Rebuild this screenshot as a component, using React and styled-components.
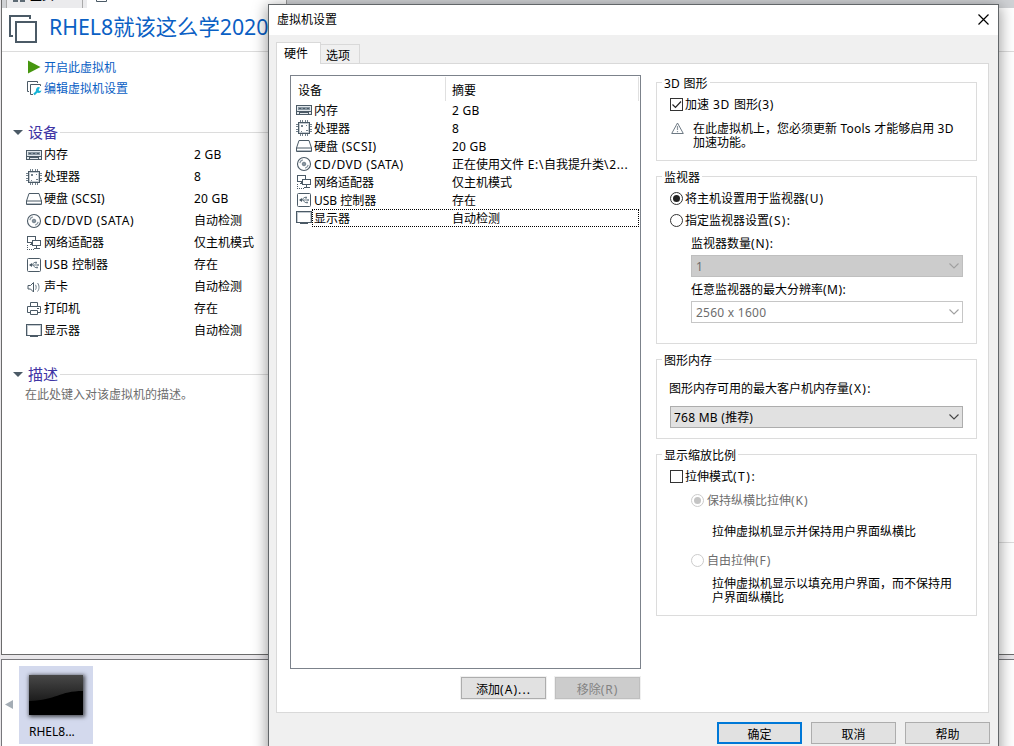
import React from "react";
import styled, { createGlobalStyle, css } from "styled-components";

const GlobalStyle = createGlobalStyle`
  * {
    box-sizing: border-box;
  }
  body {
    margin: 0;
    overflow: hidden;
    font-family: "Noto Sans", "Noto Sans CJK SC", sans-serif;
    font-size: 12px;
    color: #000;
  }
  svg {
    display: block;
    flex: none;
  }
`;

const INK = "#4b5a66";

const icons = {
  memory: (
    <g shapeRendering="crispEdges">
      <path d="M0 3h16v10H0z" fill={INK} />
      <path d="M1 4h14v5H1zM1 10h2v2H1zM4 11h8v1H4zM13 10h2v2h-2z" fill="#e4e9ed" />
      <path d="M2 5h12v3H2z" fill="#8795a0" />
      <path d="M3 6h2v1H3zM7 6h2v1H7zM11 6h2v1h-2z" fill={INK} />
    </g>
  ),
  cpu: (
    <g shapeRendering="crispEdges">
      <path
        d="M4 0h1v2H4zM6 0h1v2H6zM9 0h1v2H9zM11 0h1v2h-1zM4 14h1v2H4zM6 14h1v2H6zM9 14h1v2H9zM11 14h1v2h-1zM0 4h2v1H0zM0 6h2v1H0zM0 9h2v1H0zM0 11h2v1H0zM14 4h2v1h-2zM14 6h2v1h-2zM14 9h2v1h-2zM14 11h2v1h-2z"
        fill="#74828d"
      />
      <path d="M2.5 2.5h11v11h-11z" fill="#fff" stroke={INK} />
      <path d="M3.5 3.5h9v9h-9z" fill="none" stroke="#c3cad0" />
      <path d="M5 5h2v2H5zM10 10h2v1h-2zM5 11h1v1H5zM10 5h1v1h-1z" fill="#74828d" />
    </g>
  ),
  disk: (
    <g fill="none" stroke={INK}>
      <path d="M3 2.5h10L15.5 10v3.5H.5V10z" />
      <path d="M.5 10h15" />
      <path d="M1 12.500h14" stroke="#b4bdc4" />
    </g>
  ),
  cd: (
    <g fill="none" stroke={INK}>
      <circle cx="8" cy="8" r="6.5" strokeWidth="1.1" />
      <circle cx="8" cy="8" r="1.8" fill="#8795a0" stroke="#74828d" />
      <path d="M3.8 7.2A4.3 4.3 0 0 1 6.8 3.9M12.2 8.8a4.3 4.3 0 0 1-3 3.3" strokeWidth="1.2" stroke="#8795a0" />
    </g>
  ),
  network: (
    <g fill="none" stroke={INK} shapeRendering="crispEdges">
      <path d="M1.5 1.5h8v6h-8zM4 9.5h4M5.5 8v2" />
      <path d="M6.5 5.5h8v5h-8z" fill="#fff" />
      <path d="M10.5 11v2M8 13.5h6" />
      <path d="M1.5 10v4M1 14.5h8" strokeDasharray="1 1" />
    </g>
  ),
  usb: (
    <g fill="none" stroke={INK}>
      <rect x="1.5" y="1.5" width="13" height="13" rx="1" />
      <path d="M4 8h8M6 8l2-2.5h2M7 8l2 2.5h2" stroke="#6f7e89" />
      <path d="M6 6v4L3 8z" fill={INK} stroke="none" />
      <path d="M9 4.8h2v1.6H9zM10 9.7h2v1.6h-2zM11.5 7.2H13v1.6h-1.5z" fill="#6f7e89" stroke="none" />
    </g>
  ),
  sound: (
    <g fill="none" stroke={INK}>
      <path d="M2 6.500h2.500L7.500 3.500v9.500L4.500 10H2z" />
      <path d="M9.500 5.800c.9 1.300.9 3.600 0 4.900M11.500 4c2 2.300 2 6.200 0 8.500" stroke="#6f7e89" />
    </g>
  ),
  printer: (
    <g fill="none" stroke={INK}>
      <path d="M4.500 5.500v-4h7v4M4 11.500H1.500v-6h13v6H12" />
      <path d="M4.500 9.500h7v4h-7z" />
      <path d="M11 7.500h2" />
    </g>
  ),
  display: (
    <g shapeRendering="crispEdges">
      <path d="M0 1h16v12H0z" fill={INK} />
      <path d="M1 2h14v10H1z" fill="#c3cad0" />
      <path d="M2 3h12v9H2z" fill="#fff" />
      <path d="M4 13h8v1H4z" fill={INK} />
    </g>
  ),
};

const DeviceIcon = ({ name }) => (
  <svg width="16" height="16" viewBox="0 0 16 16">
    {icons[name]}
  </svg>
);

const Latin = styled.span`
  letter-spacing: ${(p) => p.$gap}px;
`;

// CJK glyphs keep a 12px pitch, only the latin runs are spaced
const Text = ({ children, gap = 0.25 }) => (
  <span>
    {children
      .split(/([\x20-\x7e]+)/)
      .filter(Boolean)
      .map((part, i) =>
        /[\x20-\x7e]/.test(part) ? (
          <Latin key={i} $gap={gap}>
            {part}
          </Latin>
        ) : (
          part
        )
      )}
  </span>
);

const devices = [
  { icon: "memory", name: "内存", value: "2 GB" },
  { icon: "cpu", name: "处理器", value: "8" },
  { icon: "disk", name: "硬盘 (SCSI)", value: "20 GB", dialogGap: 0.5 },
  {
    icon: "cd",
    name: "CD/DVD (SATA)",
    value: "自动检测",
    summary: "正在使用文件 E:\\自我提升类\\2...",
    gap: 0.58,
    dialogGap: 0.54,
    summaryGap: 0.65,
  },
  { icon: "network", name: "网络适配器", value: "仅主机模式" },
  { icon: "usb", name: "USB 控制器", value: "存在", gap: 0.4, dialogGap: 0 },
  { icon: "sound", name: "声卡", value: "自动检测", hidden: true },
  { icon: "printer", name: "打印机", value: "存在", hidden: true },
  { icon: "display", name: "显示器", value: "自动检测", focused: true },
];

const MachineView = () => (
  <Workspace>
    <TabStrip>
      <HomeTab>
        <HomeIcon width="12" height="12" viewBox="0 0 12 12">
          <path d="M0 6h5v6H0zM7 6h5v6H7z" fill="#5d6a74" />
          <path d="M2 6h1v4H2zM9 6h1v4H9z" fill="#eee" />
        </HomeIcon>
        主页
      </HomeTab>
      <MachineTab>
        <svg width="11" height="11" viewBox="0 0 11 11">
          <path d="M.5.5h10v10H.5z" fill="none" stroke={INK} />
        </svg>
        <TabText>RHEL8就该这么学</TabText>
      </MachineTab>
    </TabStrip>
    <Summary>
      <Heading>
        <svg width="28" height="28" viewBox="0 0 28 28">
          <path d="M4 21H1V1h20v3M7 7h20v20H7z" fill="none" stroke={INK} strokeWidth="2" />
        </svg>
        <h1>RHEL8就该这么学2020</h1>
      </Heading>
      <Columns>
        <div>
          <Actions>
            <a>
              <svg width="16" height="16" viewBox="0 0 16 16">
                <path d="M2 1.500L14.500 8 2 14.500z" fill="#46960f" />
              </svg>
              开启此虚拟机
            </a>
            <a>
              <svg width="16" height="16" viewBox="0 0 16 16">
                <path d="M3 11.500H1.500v-10h10V3M7 14.500H4.500v-10h10V6" fill="none" stroke={INK} />
                <path d="M8 14.500l4-4" stroke="#16b5d8" strokeWidth="2.200" />
                <path d="M14 7.500a2.800 2.800 0 1 0 1.500 3l-2 .5-1-1z" fill="#16b5d8" />
              </svg>
              编辑虚拟机设置
            </a>
          </Actions>
          <Section>
            <Caret />
            <span>设备</span>
          </Section>
          <DeviceTable>
            {devices.map((d) => (
              <li key={d.icon}>
                <DeviceIcon name={d.icon} />
                <DeviceName>
                  <Text gap={d.gap}>{d.name}</Text>
                </DeviceName>
                <Text>{d.value}</Text>
              </li>
            ))}
          </DeviceTable>
          <Section>
            <Caret />
            <span>描述</span>
          </Section>
          <Description>在此处键入对该虚拟机的描述。</Description>
        </div>
        <Preview />
      </Columns>
    </Summary>
    <Divider />
    <ThumbBar>
      <svg width="8" height="10" viewBox="0 0 8 10">
        <path d="M8 0v9L0 4.500z" fill="#a4adb5" />
      </svg>
      <Thumb>
        <Screen>
          <svg width="54" height="40" viewBox="0 0 54 40">
            <defs>
              <linearGradient id="gloss" x1="0" y1="0" x2="0" y2="1">
                <stop offset="0" stopColor="#484848" />
                <stop offset="1" stopColor="#1c1c1c" />
              </linearGradient>
            </defs>
            <path d="M0 0h54v40H0z" fill="#000" />
            <path d="M0 0h54v16C30 16 28 25 0 26z" fill="url(#gloss)" />
          </svg>
        </Screen>
        RHEL8...
      </Thumb>
    </ThumbBar>
  </Workspace>
);

const Select = ({ children, ...rest }) => (
  <SelectBox {...rest}>
    <Text>{children}</Text>
    <svg width="10" height="6" viewBox="0 0 10 6">
      <path d="M.5.500L5 5 9.500.500" fill="none" stroke="currentColor" strokeWidth="1.100" />
    </svg>
  </SelectBox>
);

const SettingsDialog = () => (
  <Dialog>
    <TitleBar>
      虚拟机设置
      <svg width="11" height="11" viewBox="0 0 11 11">
        <path d="M.5.500l10 10M10.500.500l-10 10" stroke="#000" strokeWidth="1.200" />
      </svg>
    </TitleBar>
    <Tabs>
      <Tab $active>硬件</Tab>
      <Tab>选项</Tab>
    </Tabs>
    <Page>
      <HardwareColumn>
        <HardwareList>
          <ListHeader>
            <span>设备</span>
            <span>摘要</span>
          </ListHeader>
          {devices
            .filter((d) => !d.hidden)
            .map((d) => (
              <HardwareRow key={d.icon}>
                <DeviceIcon name={d.icon} />
                <RowContent $focused={d.focused}>
                  <NameCell>
                    <Text gap={d.dialogGap}>{d.name}</Text>
                  </NameCell>
                  <Text gap={d.summaryGap}>{d.summary || d.value}</Text>
                </RowContent>
              </HardwareRow>
            ))}
        </HardwareList>
        <ListButtons>
          <Button $framed>
            <Text gap={1.1}>添加(A)...</Text>
          </Button>
          <Button $framed $disabled>
            <Text gap={1}>移除(R)</Text>
          </Button>
        </ListButtons>
      </HardwareColumn>
      <Options>
        <Group $height={79}>
          <GroupTitle>
            <Text>3D 图形</Text>
          </GroupTitle>
          <Choice $top={6}>
            <Checkbox>
              <svg width="11" height="11" viewBox="0 0 11 11">
                <path d="M1.500 5.500l3 3 5.500-6" fill="none" stroke="#222" strokeWidth="1.200" />
              </svg>
            </Checkbox>
            <Text gap={0.75}>加速 3D 图形(3)</Text>
          </Choice>
          <Warning>
            <svg width="13" height="12" viewBox="0 0 13 12">
              <path d="M6.500 1L12.300 11.500H.7z" fill="none" stroke="#6d7983" />
              <path d="M6.500 4v4M6.500 9v1.200" stroke="#8d979f" strokeWidth="1.200" />
            </svg>
            <p>
              <Text>在此虚拟机上，您必须更新 Tools 才能够启用 3D</Text>
              <br />
              加速功能。
            </p>
          </Warning>
        </Group>
        <Group $height={168}>
          <GroupTitle>监视器</GroupTitle>
          <Choice $top={6}>
            <Radio $checked />
            <Text gap={1.1}>将主机设置用于监视器(U)</Text>
          </Choice>
          <Choice $top={6}>
            <Radio />
            <Text gap={1.3}>指定监视器设置(S):</Text>
          </Choice>
          <Line $top={8} $left={34}>
            <Text gap={0.8}>监视器数量(N):</Text>
          </Line>
          <Select $left={34} $top={3} $kind="disabled">
            1
          </Select>
          <Line $top={5} $left={34}>
            <Text gap={0.5}>任意监视器的最大分辨率(M):</Text>
          </Line>
          <Select $left={34} $top={3} $kind="blank">
            2560 x 1600
          </Select>
        </Group>
        <Group $height={80}>
          <GroupTitle>图形内存</GroupTitle>
          <Line $top={14} $left={12}>
            <Text gap={1.3}>图形内存可用的最大客户机内存量(X):</Text>
          </Line>
          <Select $left={13} $top={9}>
            768 MB (推荐)
          </Select>
        </Group>
        <Group $height={162}>
          <GroupTitle>显示缩放比例</GroupTitle>
          <Choice $top={6}>
            <Checkbox />
            <Text gap={1.5}>拉伸模式(T):</Text>
          </Choice>
          <Choice $top={8} $indent $disabled>
            <Radio $checked $disabled />
            <Text gap={1}>保持纵横比拉伸(K)</Text>
          </Choice>
          <Line $top={16} $left={55}>
            拉伸虚拟机显示并保持用户界面纵横比
          </Line>
          <Choice $top={12} $indent $disabled>
            <Radio $disabled />
            <Text gap={1}>自由拉伸(F)</Text>
          </Choice>
          <Line $top={8} $left={55}>
            拉伸虚拟机显示以填充用户界面，而不保持用
            <br />
            户界面纵横比
          </Line>
        </Group>
      </Options>
    </Page>
    <DialogButtons>
      <Button $primary>确定</Button>
      <Button>取消</Button>
      <Button>帮助</Button>
    </DialogButtons>
  </Dialog>
);

const App = () => (
  <Desktop>
    <GlobalStyle />
    <MachineView />
    <SettingsDialog />
  </Desktop>
);

export default App;

const Desktop = styled.div`
  position: relative;
  width: 1014px;
  height: 746px;
  overflow: hidden;
  background: #e9e7ea;
`;

const Workspace = styled.div`
  display: flex;
  flex-direction: column;
  height: 100%;
  padding-left: 1px;
`;

const TabStrip = styled.div`
  display: flex;
  flex: none;
  height: 8px;
  padding-left: 4px;
  background: #d0d2d5;
  border-left: 1px solid #6b6b6b;
  overflow: hidden;
`;

const HomeTab = styled.div`
  display: flex;
  align-items: flex-end;
  gap: 5px;
  width: 77px;
  height: 8px;
  padding: 0 0 5px 6px;
  line-height: 14px;
  background: #ebebed;
  border: solid #aaa;
  border-width: 0 1px;
`;

const HomeIcon = styled.svg`
  margin-bottom: 1px;
`;

const MachineTab = styled.div`
  display: flex;
  align-items: flex-end;
  gap: 6px;
  width: 204px;
  height: 8px;
  padding: 0 0 6px 9px;
  line-height: 14px;
  background: #fff;
  border-left: 4px solid #ebebed;
  border-right: 1px solid #999;
`;

const TabText = styled.span`
  white-space: nowrap;
`;

const Summary = styled.main`
  height: 647px;
  flex: none;
  background: #fff;
  border-left: 1px solid #6b6b6b;
  border-bottom: 1px solid #6b6b6b;
`;

const Heading = styled.header`
  display: flex;
  gap: 12px;
  height: 44px;
  padding: 7px 0 0 7px;
  border-bottom: 1px solid #dcdcdc;

  h1 {
    margin: -3px 0 0;
    font-size: 21.3px;
    line-height: 30px;
    font-weight: 400;
    color: #0a60c4;
    white-space: nowrap;
  }
`;

const Columns = styled.div`
  display: grid;
  grid-template-columns: 600px 1fr;
`;

const Preview = styled.div`
  height: 491px;
  border-bottom: 1px solid #dcdcdc;
`;

const Actions = styled.nav`
  display: flex;
  flex-direction: column;
  gap: 5px;
  padding: 7px 0 0 24px;
  margin-bottom: 25px;

  a {
    display: flex;
    gap: 2px;
    height: 16px;
    line-height: 18px;
    color: #0a60c4;
  }
`;

const Section = styled.h2`
  display: flex;
  align-items: center;
  width: 100%;
  height: 22px;
  margin: 0;
  padding-left: 11px;
  font-size: 15px;
  line-height: 20px;
  font-weight: 400;
  color: #3f35a5;

  span {
    margin-top: -1px;
  }

  &::after {
    content: "";
    flex: 1;
    height: 1px;
    margin-left: 2px;
    background: #dcdcdc;
  }
`;

const Caret = styled.i`
  margin-right: 5px;
  border: 5px solid transparent;
  border-top-color: ${INK};
  border-bottom: 0;
`;

const DeviceTable = styled.ul`
  margin: 0 0 21px;
  padding: 1px 0 0 24px;
  list-style: none;

  li {
    display: flex;
    align-items: center;
    height: 22px;
    line-height: 16px;
    white-space: pre;
  }
`;

const DeviceName = styled.span`
  width: 150px;
  margin-left: 2px;
`;

const Description = styled.p`
  margin: 2px 0 0 23px;
  line-height: 16px;
  color: #6d6d6d;
`;

const Divider = styled.div`
  flex: none;
  height: 4px;
  background: #e9e7ea;
`;

const ThumbBar = styled.section`
  display: flex;
  flex: 1;
  gap: 6px;
  padding: 6px 0 0 3px;
  background: #fff;
  border: solid #77777b;
  border-width: 1px 0 0 1px;

  > svg {
    margin-top: 34px;
  }
`;

const Thumb = styled.div`
  width: 74px;
  height: 78px;
  padding: 9px 10px 0;
  background: #d3d9ed;
  line-height: 16px;
`;

const Screen = styled.div`
  width: 54px;
  height: 40px;
  margin-bottom: 9px;
  box-shadow: 1px 1px 4px 1px rgba(0, 0, 0, 0.65);
`;

const Dialog = styled.div`
  position: absolute;
  left: 268px;
  top: 4px;
  width: 731px;
  height: 760px;
  background: #f0f0f0;
  border: 1px solid #626669;
  box-shadow: 0 3px 14px 1px rgba(0, 0, 0, 0.4);
`;

const TitleBar = styled.div`
  display: flex;
  justify-content: space-between;
  align-items: center;
  height: 30px;
  padding: 0 9px 2px 8px;
  background: #fff;
`;

const Tabs = styled.div`
  display: flex;
  align-items: flex-end;
  height: 28px;
  padding-left: 7px;
`;

const Tab = styled.div`
  width: 39px;
  height: 19px;
  padding-left: 5px;
  line-height: 21px;
  border: 1px solid #d9d9d9;
  border-width: 1px 1px 0 0;

  ${(p) =>
    p.$active &&
    css`
      z-index: 1;
      width: 45px;
      height: 22px;
      margin-bottom: -1px;
      padding-left: 7px;
      background: #fff;
      border-left-width: 1px;
    `}
`;

const Page = styled.div`
  display: flex;
  gap: 15px;
  width: 713px;
  height: 650px;
  margin-left: 7px;
  padding: 11px 0 0 13px;
  background: #fff;
  border: 1px solid #d9d9d9;
`;

const HardwareColumn = styled.div`
  width: 351px;
`;

const HardwareList = styled.div`
  height: 594px;
  padding: 1px;
  border: 1px solid #7c828b;
`;

const ListHeader = styled.div`
  display: flex;
  height: 24px;
  line-height: 27px;

  span {
    width: 154px;
    padding-left: 6px;
    border-right: 1px solid #e0e0e0;
  }
  span + span {
    width: 193px;
    padding-left: 6px;
  }
`;

const HardwareRow = styled.div`
  display: flex;
  align-items: center;
  height: 18px;
  padding-left: 4px;
`;

const RowContent = styled.div`
  display: flex;
  flex: 1;
  height: 18px;
  padding-left: 1px;
  line-height: 18px;
  white-space: pre;
  border: 1px dotted ${(p) => (p.$focused ? "#000" : "transparent")};
`;

const NameCell = styled.div`
  width: 138px;
`;

const ListButtons = styled.div`
  display: flex;
  justify-content: flex-end;
  gap: 9px;
  margin: 8px 1px 0 0;
`;

const Button = styled.div`
  width: 85px;
  height: 22px;
  line-height: 23px;
  text-align: center;
  background: #e1e1e1;
  border: 1px solid #adadad;

  ${(p) =>
    p.$framed &&
    css`
      box-shadow: 0 0 0 1px #f0f0f0;
    `}
  ${(p) =>
    p.$disabled &&
    css`
      color: #838383;
      background: #ccc;
      border-color: #bfbfbf;
    `}
  ${(p) =>
    p.$primary &&
    css`
      line-height: 21px;
      border: 2px solid #0078d7;
    `}
`;

const Options = styled.div`
  display: flex;
  flex-direction: column;
  gap: 15px;
  width: 321px;
  padding-top: 7px;
`;

const Group = styled.section`
  flex: none;
  height: ${(p) => p.$height}px;
  border: 1px solid #dcdcdc;
`;

const GroupTitle = styled.div`
  width: fit-content;
  height: 16px;
  margin: -9px 0 0 5px;
  padding: 0 2px;
  line-height: 19px;
  background: #fff;
`;

const Choice = styled.div`
  display: flex;
  align-items: center;
  gap: ${(p) => (p.$indent ? 3 : 2)}px;
  height: 16px;
  margin-top: ${(p) => p.$top}px;
  padding-left: ${(p) => (p.$indent ? 34 : 13)}px;
  line-height: 16px;
  white-space: pre;
  color: ${(p) => (p.$disabled ? "#6d6d6d" : "#000")};

  > :last-child {
    padding-top: 2px;
  }
`;

const Checkbox = styled.span`
  width: 13px;
  height: 13px;
  border: 1px solid #333;
`;

const Radio = styled.span`
  display: flex;
  align-items: center;
  justify-content: center;
  width: 13px;
  height: 13px;
  border: 1px solid ${(p) => (p.$disabled ? "#ccc" : "#333")};
  border-radius: 50%;

  &::after {
    content: "";
    display: ${(p) => (p.$checked ? "block" : "none")};
    width: 7px;
    height: 7px;
    border-radius: 50%;
    background: ${(p) => (p.$disabled ? "#c4c4c4" : "#222")};
  }
`;

const Warning = styled.div`
  display: flex;
  gap: 9px;
  margin-top: 10px;
  padding-left: 14px;

  p {
    margin: 0;
    line-height: 14px;
    white-space: pre;
  }
`;

const Line = styled.div`
  margin: ${(p) => p.$top}px 0 0 ${(p) => p.$left}px;
  line-height: 14px;
  padding: 1px 0;
  white-space: pre;
`;

const selectKinds = {
  disabled: { back: "#ccc", line: "#bfbfbf", ink: "#6d6d6d", arrow: "#a0a0a0" },
  blank: { back: "#fff", line: "#c6c6c6", ink: "#6d6d6d", arrow: "#a0a0a0" },
  normal: { back: "#e1e1e1", line: "#adadad", ink: "#000", arrow: "#444" },
};

const kindOf = (p) => selectKinds[p.$kind || "normal"];

const SelectBox = styled.div`
  display: flex;
  align-items: center;
  height: 22px;
  margin: ${(p) => p.$top}px 13px 0 ${(p) => p.$left}px;
  padding: 0 3px 0 ${(p) => (p.$kind ? 4 : 3)}px;
  white-space: pre;
  line-height: 16px;
  background: ${(p) => kindOf(p).back};
  border: 1px solid ${(p) => kindOf(p).line};
  color: ${(p) => kindOf(p).ink};

  span {
    padding-top: 1px;
  }
  svg {
    margin-left: auto;
    color: ${(p) => kindOf(p).arrow};
  }
`;

const DialogButtons = styled.div`
  display: flex;
  justify-content: flex-end;
  gap: 9px;
  padding: 9px 8px 0 0;
`;
